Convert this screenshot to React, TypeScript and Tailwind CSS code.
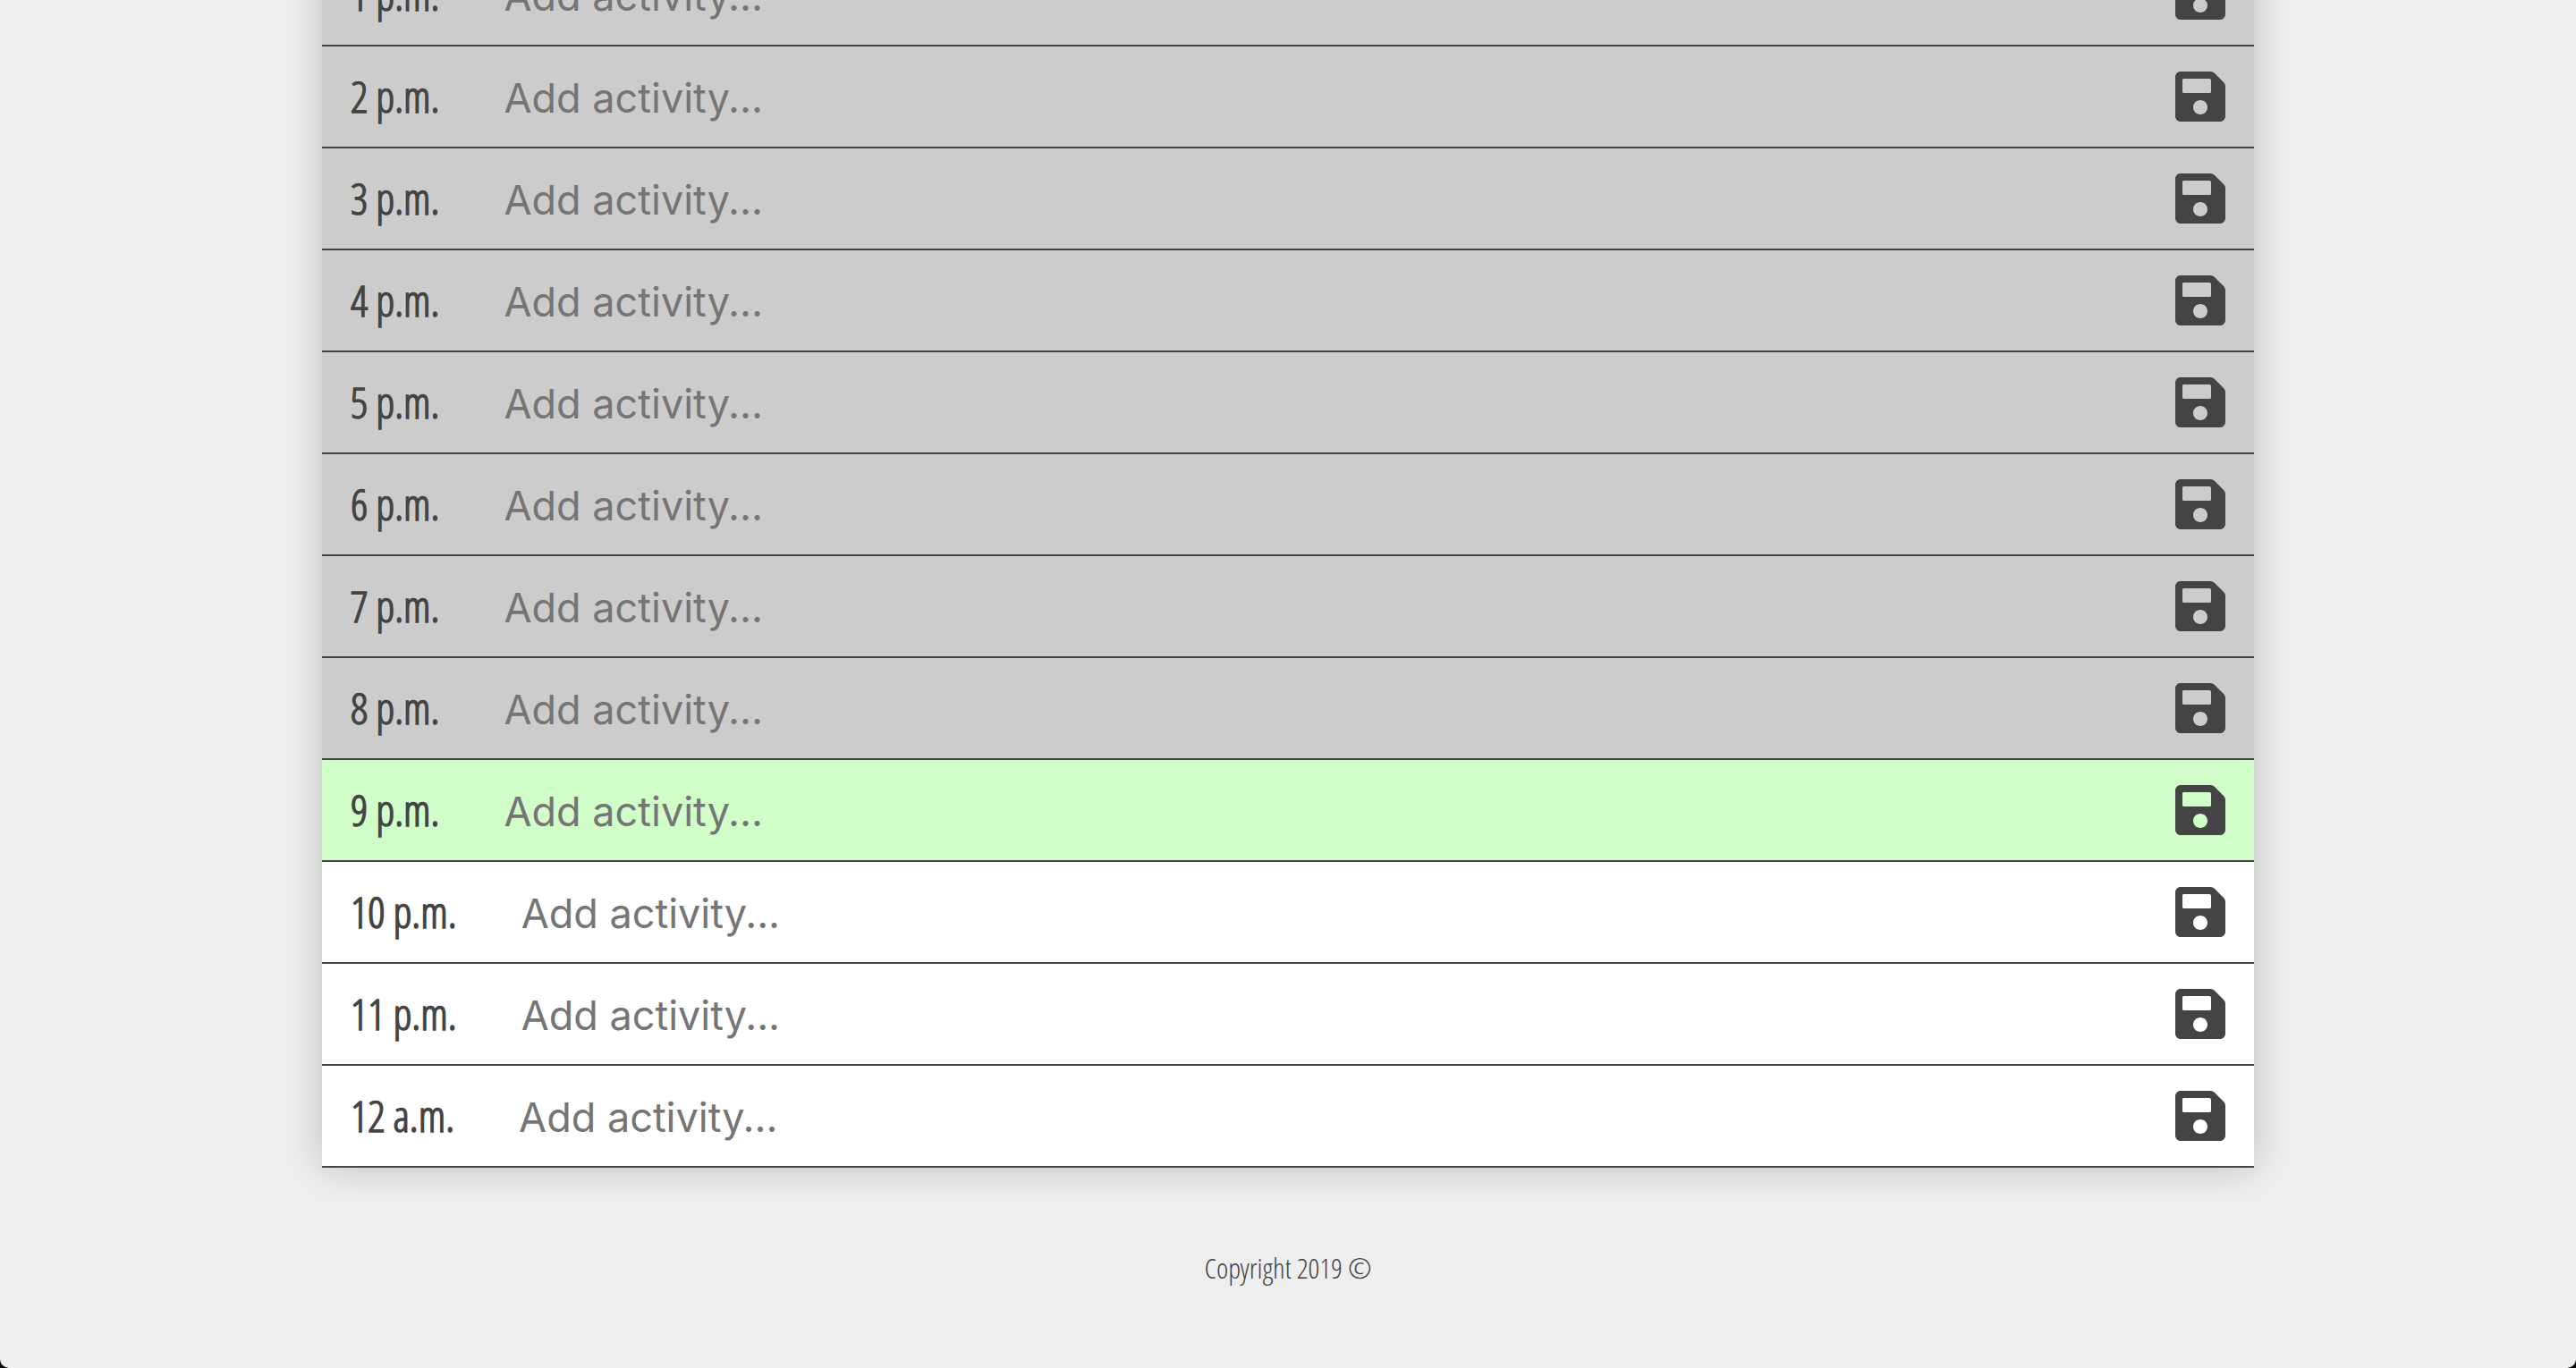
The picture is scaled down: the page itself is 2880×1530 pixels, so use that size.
import { FaSave } from "react-icons/fa";

type Phase = "past" | "present" | "future";

const hours: { label: string; phase: Phase }[] = [
  { label: "1 p.m.", phase: "past" },
  { label: "2 p.m.", phase: "past" },
  { label: "3 p.m.", phase: "past" },
  { label: "4 p.m.", phase: "past" },
  { label: "5 p.m.", phase: "past" },
  { label: "6 p.m.", phase: "past" },
  { label: "7 p.m.", phase: "past" },
  { label: "8 p.m.", phase: "past" },
  { label: "9 p.m.", phase: "present" },
  { label: "10 p.m.", phase: "future" },
  { label: "11 p.m.", phase: "future" },
  { label: "12 a.m.", phase: "future" },
];

const phaseBackground: Record<Phase, string> = {
  past: "bg-[#cccccc]",
  present: "bg-[#d0fdc8]",
  future: "bg-white",
};

function HourRow({ label, phase }: { label: string; phase: Phase }) {
  const id = `activity-${label.replace(/[^0-9apm]/g, "")}`;
  return (
    <li className={`flex items-center border-b-2 border-[#444444] py-5 pr-7 pl-8 ${phaseBackground[phase]}`}>
      <label
        htmlFor={id}
        className="shrink-0 font-['Open_Sans_Condensed_Light','Open_Sans_Condensed',sans-serif] text-5xl leading-[72px] font-bold whitespace-nowrap text-[#444444]"
      >
        {label}
      </label>
      <input
        id={id}
        type="text"
        placeholder="Add activity..."
        className="ml-18 h-18 min-w-0 flex-1 bg-transparent pt-0.5 font-[Inter,sans-serif] text-[45px] text-[#444444] outline-none placeholder:text-[#757575]"
      />
      <button type="button" aria-label={`Save ${label}`} className="shrink-0 cursor-pointer text-[#444444]">
        <FaSave className="size-16" />
      </button>
    </li>
  );
}

export default function App() {
  return (
    <div className="h-screen bg-black">
      <div className="flex h-full flex-col items-center justify-end overflow-hidden rounded-b-[10px] bg-[#eeeeee]">
        <main className="w-3/4 shadow-[0_0_40px_rgba(0,0,0,0.2)]">
          <ul>
            {hours.map((hour) => (
              <HourRow key={hour.label} {...hour} />
            ))}
          </ul>
        </main>
        <footer className="py-[88px] text-center font-['Open_Sans_Condensed_Light','Open_Sans_Condensed',sans-serif] text-[32px] leading-[48px] text-[#444444]">
          Copyright 2019 ©
        </footer>
      </div>
    </div>
  );
}
